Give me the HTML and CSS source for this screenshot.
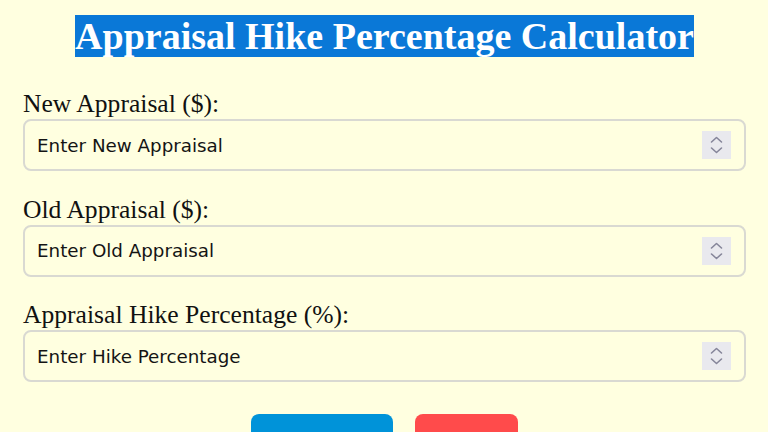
FILE: index.html
```html
<!DOCTYPE html>
<html lang="en">
<head>
<meta charset="utf-8">
<title>Appraisal Hike Percentage Calculator</title>
<link rel="stylesheet" href="styles.css">
</head>
<body>
<div class="container">
  <h1 class="heading"><span class="heading-text">Appraisal Hike Percentage Calculator</span></h1>
  <form class="calc-form">
    <div class="field">
      <label class="field-label" for="newAppraisal">New Appraisal ($):</label>
      <div class="input-box">
        <input class="field-input" type="number" id="newAppraisal" placeholder="Enter New Appraisal">
        <span class="spin"><svg width="29" height="28" viewBox="0 0 29 28"><path d="M9.5 11 L14.5 6.5 L19.5 11 M9.5 17 L14.5 21.5 L19.5 17" fill="none" stroke="#86869a" stroke-width="1.6" stroke-linecap="round" stroke-linejoin="round"/></svg></span>
      </div>
    </div>
    <div class="field">
      <label class="field-label" for="oldAppraisal">Old Appraisal ($):</label>
      <div class="input-box">
        <input class="field-input" type="number" id="oldAppraisal" placeholder="Enter Old Appraisal">
        <span class="spin"><svg width="29" height="28" viewBox="0 0 29 28"><path d="M9.5 11 L14.5 6.5 L19.5 11 M9.5 17 L14.5 21.5 L19.5 17" fill="none" stroke="#86869a" stroke-width="1.6" stroke-linecap="round" stroke-linejoin="round"/></svg></span>
      </div>
    </div>
    <div class="field">
      <label class="field-label" for="hikePercentage">Appraisal Hike Percentage (%):</label>
      <div class="input-box">
        <input class="field-input" type="number" id="hikePercentage" placeholder="Enter Hike Percentage">
        <span class="spin"><svg width="29" height="28" viewBox="0 0 29 28"><path d="M9.5 11 L14.5 6.5 L19.5 11 M9.5 17 L14.5 21.5 L19.5 17" fill="none" stroke="#86869a" stroke-width="1.6" stroke-linecap="round" stroke-linejoin="round"/></svg></span>
      </div>
    </div>
    <div class="actions">
      <button type="button" class="btn btn-calc">Calculate</button>
      <button type="reset" class="btn btn-reset">Reset</button>
    </div>
  </form>
</div>
</body>
</html>
```
FILE: styles.css
```css
html, body {
  margin: 0;
  padding: 0;
  background: #ffffe0;
}

body {
  font-family: "Liberation Serif", "Times New Roman", serif;
  color: #111;
}

.container {
  padding: 14px 22px 0 23px;
}

.heading {
  margin: 0 0 31px;
  text-align: center;
  font-size: 38px;
  font-weight: bold;
  line-height: normal;
}

.heading-text {
  background: #0a78d7;
  color: #ffffff;
}

.calc-form {
  display: flex;
  flex-direction: column;
  gap: 23.5px;
}

.field {
  display: flex;
  flex-direction: column;
}

.field-label {
  display: block;
  font-size: 25.6px;
  line-height: normal;
  color: #111;
}

.input-box {
  display: flex;
  align-items: center;
  height: 52px;
  box-sizing: border-box;
  border: 2px solid #d9d9d2;
  border-radius: 8px;
  padding: 0 13px 0 12px;
}

.field-input {
  flex: 1;
  min-width: 0;
  border: none;
  outline: none;
  background: transparent;
  padding: 0;
  font-family: "DejaVu Sans", Verdana, sans-serif;
  font-size: 18.3px;
  color: #111;
  -moz-appearance: textfield;
}

.field-input::placeholder {
  color: #141414;
  opacity: 1;
}

.field-input::-webkit-inner-spin-button,
.field-input::-webkit-outer-spin-button {
  -webkit-appearance: none;
  margin: 0;
}

.spin {
  display: flex;
  width: 29px;
  height: 28px;
  background: #e9e9ee;
}

.actions {
  display: flex;
  justify-content: center;
  gap: 22px;
  margin-top: 8.5px;
}

.btn {
  height: 68px;
  border: none;
  border-radius: 8px;
  padding: 0 23px;
  font-family: "Liberation Serif", "Times New Roman", serif;
  font-size: 25.6px;
  color: #ffffff;
  cursor: pointer;
}

.btn-calc {
  background: #0093d9;
}

.btn-reset {
  background: #ff4b4b;
}
```
